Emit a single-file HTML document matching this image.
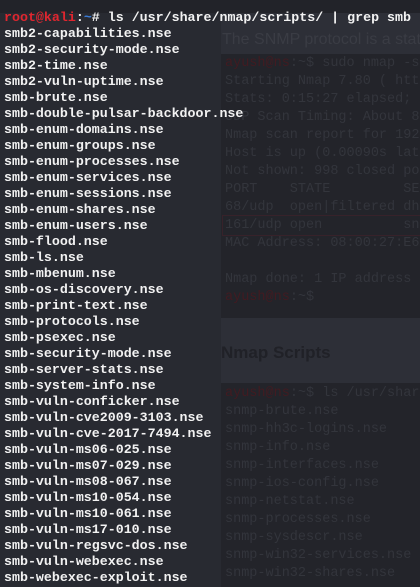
<!DOCTYPE html>
<html><head><meta charset="utf-8"><style>
html,body{margin:0;padding:0}
body{width:420px;height:587px;overflow:hidden;background:#2d2f37;position:relative;font-family:"Liberation Mono",monospace}
.top{position:absolute;left:0;top:0;width:420px;height:13px;background:#222329}
.leftbg{position:absolute;left:0;top:13px;width:221px;height:574px;background:#282a31}
.blk{position:absolute;left:221px;width:199px;background:#23242a}
.rt{position:absolute;left:225px;font-size:13.5px;color:#33353c;white-space:pre;line-height:18px}
.rt .p{color:#421b21}
.para{position:absolute;left:222px;top:31px;font:16px "Liberation Sans",sans-serif;color:#3a3c44;white-space:pre}
.h{position:absolute;left:221px;top:343px;font:bold 17px "Liberation Sans",sans-serif;color:#202127}
.term{position:absolute;left:4px;top:10px;font-size:13.3px;font-weight:bold;line-height:16px;color:#f2f2f2;white-space:pre}
.term .r{color:#e0262f}.term .b{color:#3b7cd8}
.box{position:absolute;left:222px;top:215px;width:200px;height:21px;border:1px solid #37222a;box-sizing:border-box}
</style></head><body>
<div class="top"></div>
<div class="leftbg"></div>
<div class="para">The SNMP protocol is a stat</div>
<div class="blk" style="top:54px;height:264px"></div>
<div class="box"></div>
<div class="rt" style="top:55px"><span class="p">ayush@ns</span>:~$ sudo nmap -sU
Starting Nmap 7.80 ( https
Stats: 0:15:27 elapsed; 0
UDP Scan Timing: About 88
Nmap scan report for 192.
Host is up (0.00090s late
Not shown: 998 closed por
PORT    STATE         SER
68/udp  open|filtered dhc
161/udp open          snm
MAC Address: 08:00:27:E6:

Nmap done: 1 IP address (
<span class="p">ayush@ns</span>:~$</div>
<div class="h">Nmap Scripts</div>
<div class="blk" style="top:383px;height:204px"></div>
<div class="rt" style="top:385px"><span class="p">ayush@ns</span>:~$ ls /usr/share
snmp-brute.nse
snmp-hh3c-logins.nse
snmp-info.nse
snmp-interfaces.nse
snmp-ios-config.nse
snmp-netstat.nse
snmp-processes.nse
snmp-sysdescr.nse
snmp-win32-services.nse
snmp-win32-shares.nse</div>
<div class="term"><span class="r">root@kali</span>:<span class="b">~</span># ls /usr/share/nmap/scripts/ | grep smb
smb2-capabilities.nse
smb2-security-mode.nse
smb2-time.nse
smb2-vuln-uptime.nse
smb-brute.nse
smb-double-pulsar-backdoor.nse
smb-enum-domains.nse
smb-enum-groups.nse
smb-enum-processes.nse
smb-enum-services.nse
smb-enum-sessions.nse
smb-enum-shares.nse
smb-enum-users.nse
smb-flood.nse
smb-ls.nse
smb-mbenum.nse
smb-os-discovery.nse
smb-print-text.nse
smb-protocols.nse
smb-psexec.nse
smb-security-mode.nse
smb-server-stats.nse
smb-system-info.nse
smb-vuln-conficker.nse
smb-vuln-cve2009-3103.nse
smb-vuln-cve-2017-7494.nse
smb-vuln-ms06-025.nse
smb-vuln-ms07-029.nse
smb-vuln-ms08-067.nse
smb-vuln-ms10-054.nse
smb-vuln-ms10-061.nse
smb-vuln-ms17-010.nse
smb-vuln-regsvc-dos.nse
smb-vuln-webexec.nse
smb-webexec-exploit.nse</div>
</body></html>
